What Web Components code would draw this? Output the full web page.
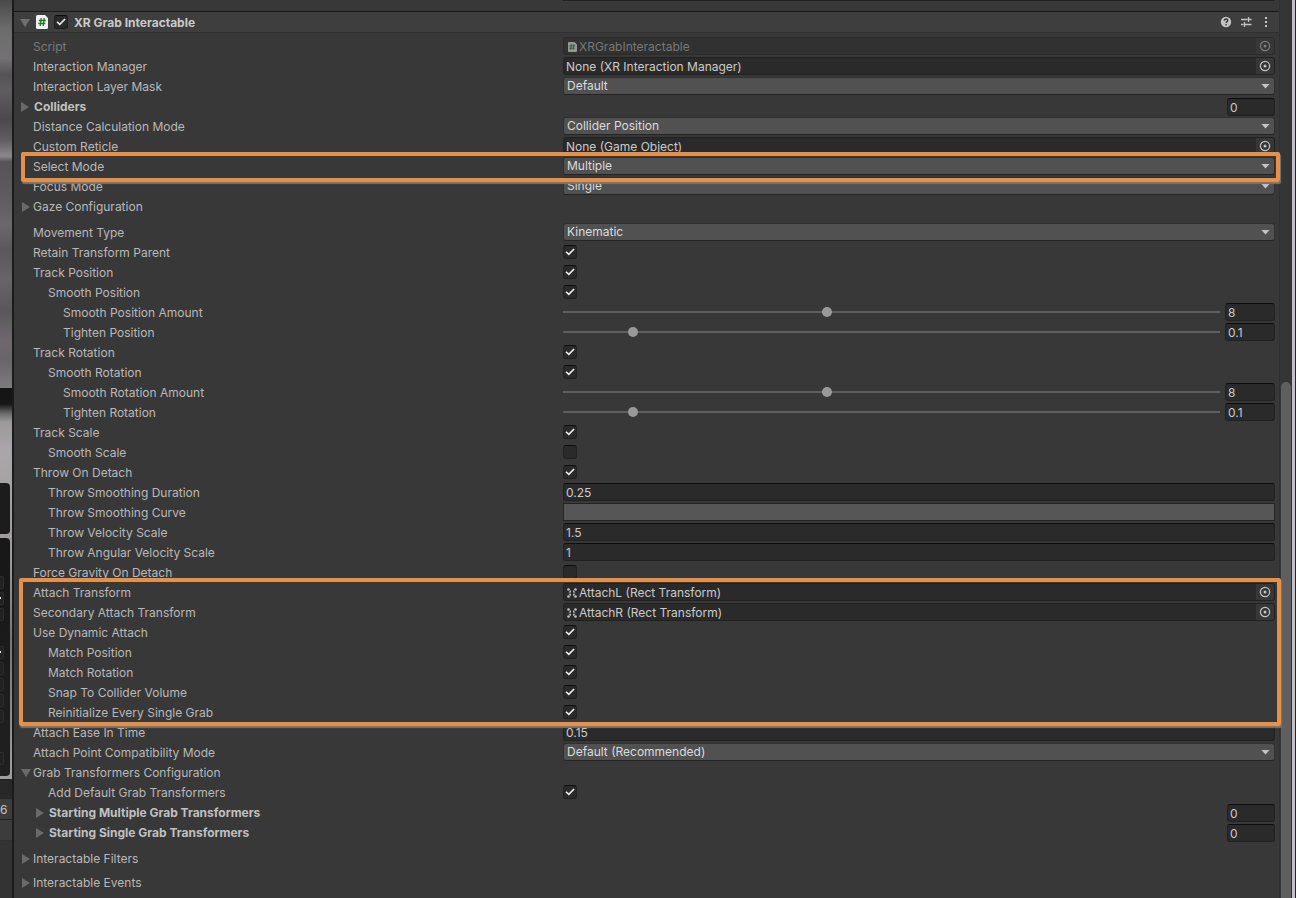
<!DOCTYPE html>
<html lang="en">
<head>
<meta charset="utf-8">
<title>Inspector</title>
<style>
html, body { margin: 0; background: #383838; }
body { font: 12px/18px Inter, "Liberation Sans", sans-serif; color: #c4c4c4; }
</style>
</head>
<body>
<editor-window>
  <scene-strip slot="side"></scene-strip>
  <component-header>XR Grab Interactable</component-header>
  <property-list>
    <object-row icon="script" value="XRGrabInteractable" disabled>Script</object-row>
    <object-row value="None (XR Interaction Manager)">Interaction Manager</object-row>
    <select-row value="Default">Interaction Layer Mask</select-row>
    <foldout-row strong count="0">Colliders</foldout-row>
    <select-row value="Collider Position">Distance Calculation Mode</select-row>
    <object-row value="None (Game Object)">Custom Reticle</object-row>
    <marked-group>
      <select-row value="Multiple">Select Mode</select-row>
    </marked-group>
    <select-row value="Single">Focus Mode</select-row>
    <foldout-row>Gaze Configuration</foldout-row>
    <select-row spaced value="Kinematic">Movement Type</select-row>
    <check-row checked>Retain Transform Parent</check-row>
    <check-row checked>Track Position</check-row>
    <check-row checked indent="1">Smooth Position</check-row>
    <slider-row indent="2" value="8" max="20">Smooth Position Amount</slider-row>
    <slider-row indent="2" value="0.1" max="1">Tighten Position</slider-row>
    <check-row checked>Track Rotation</check-row>
    <check-row checked indent="1">Smooth Rotation</check-row>
    <slider-row indent="2" value="8" max="20">Smooth Rotation Amount</slider-row>
    <slider-row indent="2" value="0.1" max="1">Tighten Rotation</slider-row>
    <check-row checked>Track Scale</check-row>
    <check-row indent="1">Smooth Scale</check-row>
    <check-row checked>Throw On Detach</check-row>
    <text-row indent="1" value="0.25">Throw Smoothing Duration</text-row>
    <curve-row indent="1">Throw Smoothing Curve</curve-row>
    <text-row indent="1" value="1.5">Throw Velocity Scale</text-row>
    <text-row indent="1" value="1">Throw Angular Velocity Scale</text-row>
    <check-row>Force Gravity On Detach</check-row>
    <marked-group wide>
      <object-row icon="rect" value="AttachL (Rect Transform)">Attach Transform</object-row>
      <object-row icon="rect" value="AttachR (Rect Transform)">Secondary Attach Transform</object-row>
      <check-row checked>Use Dynamic Attach</check-row>
      <check-row checked indent="1">Match Position</check-row>
      <check-row checked indent="1">Match Rotation</check-row>
      <check-row checked indent="1">Snap To Collider Volume</check-row>
      <check-row checked indent="1">Reinitialize Every Single Grab</check-row>
    </marked-group>
    <text-row value="0.15">Attach Ease In Time</text-row>
    <select-row value="Default (Recommended)">Attach Point Compatibility Mode</select-row>
    <foldout-row open>Grab Transformers Configuration</foldout-row>
    <check-row checked indent="1">Add Default Grab Transformers</check-row>
    <foldout-row strong indent="1" count="0">Starting Multiple Grab Transformers</foldout-row>
    <foldout-row strong indent="1" count="0">Starting Single Grab Transformers</foldout-row>
    <foldout-row spaced>Interactable Filters</foldout-row>
    <foldout-row near>Interactable Events</foldout-row>
  </property-list>
</editor-window>

<script>
const BOX = `
*, *::before, *::after { box-sizing: border-box; }
input, button, select { margin: 0; padding: 0; border: 0; font: inherit; color: inherit; background: none; outline: 0; }
input[type=checkbox] { appearance: none; flex: none; width: 14px; height: 14px; border: 1px solid #212121; border-top-color: #0d0d0d; border-radius: 3px;
  background: #2a2a2a; display: grid; place-items: center; }
input[type=checkbox]:checked::before { content: ""; width: 10px; height: 8px; background: #ececec;
  clip-path: polygon(4% 52%, 16% 40%, 37% 66%, 85% 6%, 97% 18%, 38% 94%); }
.tri { flex: none; background: #6a6a6a; width: 8px; height: 10px; clip-path: polygon(0 0, 100% 50%, 0 100%); }
.tri.down { width: 10px; height: 8px; clip-path: polygon(0 0, 100% 0, 50% 100%); }
`;
const SCRIPT_ICON = `<svg width="10" height="12" viewBox="0 0 10 12"><path fill="#979797" d="M2 1h5.500L10 3.500V10a1 1 0 0 1-1 1H1.500A1 1 0 0 1 1 10V2a1 1 0 0 1 1-1z"/><path stroke="#3c5a3e" fill="none" d="M4.300 3.200 3.500 8.800M6.900 3.200 6.100 8.800M2.500 4.900h5.500M2.200 7.200h5.500"/></svg>`;
const RECT_ICON = `<svg width="10" height="12" viewBox="0 0 10 12"><g fill="#c4c4c4"><circle cx="1.500" cy="2.500" r="1.300"/><circle cx="8.500" cy="2.500" r="1.300"/><circle cx="1.500" cy="9.500" r="1.300"/><circle cx="8.500" cy="9.500" r="1.300"/><path d="M1.500 5.500 4 3v2.500zM8.500 5.500 6 3v2.500zM1.500 6.800H4v2.500zM8.500 6.800H6v2.500z"/></g></svg>`;

class Base extends HTMLElement {
  connectedCallback() {
    if (this.shadowRoot) return;
    const t = document.createElement('template');
    t.innerHTML = `<style>${BOX}${this.css()}</style>${this.html()}`;
    this.attachShadow({ mode: 'open' }).append(t.content.cloneNode(true));
  }
  at(name, fallback = '') { return this.getAttribute(name) ?? fallback; }
}

class EditorWindow extends Base {
  css() { return `
    :host { display: flex; min-height: 100vh; overflow: hidden; }
    .side { flex: none; width: 14px; display: flex; border-right: 2px solid #1b1b1b; }
    main { flex: 1; min-width: 0; }
    .previous { height: 11px; padding-right: 4px; display: grid; grid-template-columns: 549fr 712fr; }
    .previous i { grid-column: 2; height: 1px; background: #212121; }
    .bar { flex: none; width: 13px; background: #353535; border-left: 1px solid #303030; padding: 0 1px; display: grid; grid-template-rows: 382fr 516fr; }
    .thumb { grid-row: 2; background: #5f5f5f; border-radius: 5px 5px 0 0; }
    .edge { flex: none; width: 4px; background: #c3c0c5; border-right: 1px solid #25252b; }`; }
  html() { return `<div class="side"><slot name="side"></slot></div>
    <main><div class="previous"><i></i></div><slot></slot></main>
    <div class="bar"><div class="thumb"></div></div><div class="edge"></div>`; }
}

class SceneStrip extends Base {
  css() { return `
    :host { display: flex; flex-direction: column; width: 12px; overflow: hidden; background: #333; }
    .photo { height: 779px; flex: none; display: flex; flex-direction: column; gap: 4px; padding: 483px 2px 3px 0;
      background: linear-gradient(#4b4a4b 0, #6e6d6e 30px, #737173 58px, #555455 75px, #5f5d5f 90px, #4b494b 120px, #605d60 140px, #8a888a 156px, #555355 162px, #5c5a5c 190px, #6b686b 225px, #5a585a 250px, #686468 280px, #59575a 310px, #6e686e 340px, #686668 360px, #7d7b7d 388px, #141414 388px, #161616 404px, #6f6f6f 414px, #9b999a 422px, #aaa6a9 450px, #a6a3a5 483px, #9c989b 560px, #777 640px, #888688 700px, #a09ea0 779px); }
    .card { height: 51px; background: #1c1c1c; border-radius: 0 4px 4px 0; }
    .fields { flex: 1; background: linear-gradient(#171717, #202020); border-radius: 0 4px 4px 0; display: flex; flex-direction: column; padding: 38px 6px 0 0; gap: 3px; overflow: hidden; }
    .fields i { flex: none; height: 13px; background: #222; border: 1px solid #2c2c2c; border-left: 0; border-radius: 0 2px 2px 0; position: relative; }
    .fields i.gap { margin-top: 22px; } .fields i.far { margin-top: 26px; }
    .fields .pop::after { content: ""; position: absolute; left: 0; top: 4px; width: 1px; height: 2px; background: #eee; }
    .tab { height: 20px; flex: none; background: #282828; border-radius: 0 4px 0 0; border-top: 1px solid #1b1b1b; }
    .num { height: 21px; flex: none; background: #3c3c3c; color: #c4c4c4; border-bottom: 1px solid #232323; line-height: 22px; }
    .tool { height: 21px; flex: none; background: #3c3c3c; border-bottom: 1px solid #303030; }`; }
  html() { return `<div class="photo"><div class="card"></div>
    <div class="fields"><i></i><i class="pop"></i><i></i><i class="pop gap"></i><i></i><i></i><i></i><i></i><i class="far"></i></div></div>
    <div class="tab"></div><div class="num">6</div><div class="tool"></div>`; }
}

class ComponentHeader extends Base {
  css() { return `
    :host { display: block; background: #3e3e3e; border-top: 1px solid #1a1a1a; border-bottom: 1px solid #303030; }
    header { height: 20px; display: flex; align-items: center; padding: 0 6px 0 6px; }
    .tri { margin: 2px 6px 0 0; background: #707070; }
    label { display: flex; align-items: center; gap: 6px; font-weight: 700; color: #cacaca; margin-left: 6px; }
    .title { padding-top: 2px; }
    .tools { margin-left: auto; display: flex; gap: 6px; }
    button { width: 14px; height: 14px; display: grid; }`; }
  html() { return `<header><span class="tri down"></span>
    <svg width="12" height="14" viewBox="0 0 12 14"><path fill="#f2f2f2" d="M1.500 0H9l3 3v9.500a1.500 1.500 0 0 1-1.500 1.500h-9A1.500 1.500 0 0 1 0 12.500v-11A1.500 1.500 0 0 1 1.500 0z"/><path stroke="#23792a" stroke-width="1.300" fill="none" d="M5.200 3 4.200 11M8.200 3 7.200 11M2.800 5.500h7M2.300 8.500h7"/></svg>
    <label><input type="checkbox" checked><span class="title"><slot></slot></span></label>
    <span class="tools">
      <button aria-label="Help"><svg width="14" height="14" viewBox="0 0 14 14"><circle cx="7" cy="7" r="5.200" fill="#c4c4c4"/><path d="M5.200 5.700c0-1 .8-1.700 1.800-1.700s1.800.6 1.800 1.500c0 1.100-1.700 1.200-1.700 2.500M7.100 9v1.400" stroke="#333" stroke-width="1.300" fill="none"/></svg></button>
      <button aria-label="Presets"><svg width="14" height="14" viewBox="0 0 14 14"><path d="M2 4.500h6.500M10 4.500h2.500M9.500 2v5M2 9.500h2.500M6 9.500h6.500M5.500 7v5" stroke="#c4c4c4" stroke-width="1.300" fill="none"/></svg></button>
      <button aria-label="Menu"><svg width="14" height="14" viewBox="0 0 14 14" fill="#c4c4c4"><path d="M6 2h2v2H6zM6 6h2v2H6zM6 10h2v2H6z"/></svg></button>
    </span></header>`; }
}

class PropertyList extends Base {
  css() { return `:host { display: block; padding: 4px 0; }`; }
  html() { return `<slot></slot>`; }
}

class MarkedGroup extends Base {
  css() { return `
    :host { display: flow-root; position: relative; }
    .mark { position: absolute; z-index: 1; pointer-events: none; top: -5px; bottom: -5px; left: 7px; right: -1px;
      border: 4px solid #e69048; border-radius: 2px; box-shadow: 1px 2px 1px #777; }
    :host([wide]) .mark { left: 5px; right: -2px; bottom: -3px; }`; }
  html() { return `<slot></slot><div class="mark"></div>`; }
}

class Row extends Base {
  css() { const n = Number(this.at('indent', '0')); return `
    :host { display: grid; grid-template-columns: 549fr 712fr; height: 18px; margin-bottom: 2px; padding-right: 4px; }
    :host([spaced]) { margin-top: 8px; }
    :host([near]) { margin-top: 6px; }
    .name { padding-left: ${19 + 15 * n}px; line-height: 20px; height: 18px; white-space: nowrap; color: #b8b8b8; }
    .value { min-width: 0; display: flex; align-items: center; }
    .box { width: 100%; min-width: 0; height: 18px; line-height: 18px; background: #2a2a2a; border: 1px solid #212121; border-top-color: #0d0d0d; border-radius: 3px;
      padding: 1px 2px 0; color: #cacaca; }
    ${this.more()}`; }
  more() { return ''; }
  html() { return `<label class="name" for="f"><slot></slot></label><div class="value">${this.control()}</div>`; }
}

class CheckRow extends Row {
  control() { return `<input id="f" type="checkbox" ${this.hasAttribute('checked') ? 'checked' : ''}>`; }
}
class TextRow extends Row {
  control() { return `<input id="f" class="box" value="${this.at('value')}">`; }
}
class CurveRow extends Row {
  more() { return `.box { background: #565656; border-color: #242424; border-radius: 0; }`; }
  control() { return `<button id="f" class="box"></button>`; }
}
class SelectRow extends Row {
  more() { return `
    .value { display: grid; align-items: center; }
    select { grid-area: 1 / 1; appearance: none; width: 100%; height: 18px; line-height: 16px; background: #515151; border: 1px solid #303030; border-bottom-color: #242424; border-radius: 3px; padding: 0 20px 0 3px; color: #dcdcdc; }
    .arrow { grid-area: 1 / 1; justify-self: end; width: 9px; height: 5px; margin-right: 5px; background: #c4c4c4; clip-path: polygon(0 0, 100% 0, 50% 100%); pointer-events: none; }`; }
  control() { return `<select id="f"><option>${this.at('value')}</option></select><span class="arrow"></span>`; }
}
class ObjectRow extends Row {
  more() { return `
    .box { display: flex; align-items: center; padding: 0; border-top-color: #212121; }
    .box svg { flex: none; }
    .icon { display: flex; margin: 1px 2px 0 3px; }
    input { flex: 1; min-width: 0; height: 16px; padding: 1px 0 0; }
    .box > input:first-child { padding-left: 2px; }
    button { flex: none; width: 18px; height: 16px; background: #373737; border-radius: 0 2px 2px 0; display: grid; place-items: center; }
    :host([disabled]) .name, :host([disabled]) .box { color: #787878; }
    :host([disabled]) .box { background: #313131; border-color: #2b2b2b; }
    :host([disabled]) button svg { opacity: .5; }`; }
  control() {
    const icon = { script: SCRIPT_ICON, rect: RECT_ICON }[this.at('icon')];
    const off = this.hasAttribute('disabled') ? 'disabled' : '';
    return `<div class="box">${icon ? `<span class="icon">${icon}</span>` : ''}<input id="f" readonly ${off} value="${this.at('value')}">
      <button aria-label="Select object" ${off}><svg width="12" height="12" viewBox="0 0 12 12"><circle cx="6" cy="6" r="4.600" fill="none" stroke="#c4c4c4" stroke-width="1.200"/><circle cx="6" cy="6" r="1.500" fill="#c4c4c4"/></svg></button></div>`; }
}
class SliderRow extends Row {
  more() { return `
    .value { gap: 5px; }
    input[type=range] { appearance: none; flex: 1; min-width: 0; height: 18px; background: linear-gradient(#5e5e5e, #5e5e5e) center / 100% 2px no-repeat; }
    input[type=range]::-webkit-slider-thumb { appearance: none; width: 10px; height: 10px; border-radius: 50%; background: #999; }
    .box { flex: none; width: 50px; }`; }
  control() { const v = this.at('value'), m = this.at('max');
    return `<input id="f" type="range" min="0" max="${m}" step="any" value="${v}"><input class="box" aria-label="Value" value="${v}">`; }
}
class FoldoutRow extends Row {
  more() { const n = Number(this.at('indent', '0')); return `
    .fold { display: flex; align-items: center; text-align: left; height: 20px; padding-left: ${8 + 15 * n}px; }
    .tri { margin-right: 3px; }
    .tri.down { margin-right: 2px; }
    :host([strong]) .fold { font-weight: 700; color: #c0c0c0; padding-left: ${7 + 15 * n}px; }
    :host([strong]) .tri { margin-right: 5px; }
    :host([open]) .fold { padding-left: 7px; }
    .value { justify-content: flex-end; }
    .box { width: 48px; }`; }
  html() { const open = this.hasAttribute('open');
    return `<button class="name fold" aria-expanded="${open}"><span class="tri ${open ? 'down' : ''}"></span><slot></slot></button>
      <div class="value">${this.hasAttribute('count') ? `<input class="box" aria-label="Size" value="${this.at('count')}">` : ''}</div>`; }
}

for (const [tag, type] of Object.entries({
  'editor-window': EditorWindow, 'scene-strip': SceneStrip, 'component-header': ComponentHeader, 'property-list': PropertyList,
  'marked-group': MarkedGroup, 'check-row': CheckRow, 'text-row': TextRow, 'curve-row': CurveRow, 'select-row': SelectRow,
  'object-row': ObjectRow, 'slider-row': SliderRow, 'foldout-row': FoldoutRow
})) customElements.define(tag, type);
</script>
</body>
</html>
